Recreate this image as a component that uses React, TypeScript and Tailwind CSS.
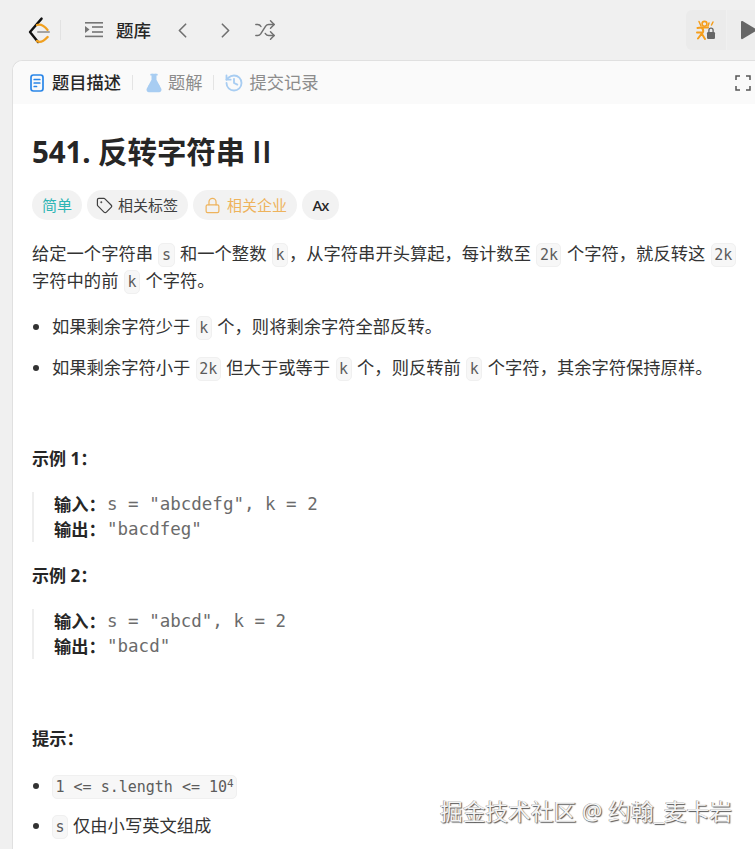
import { Tag, Lock, ChevronLeft, ChevronRight, Shuffle, FlaskConical, History } from "lucide-react";
import type { ReactNode } from "react";

const sans = "font-['Noto_Sans','Noto_Sans_CJK_SC',sans-serif]";

function Code({ children, className = "mx-[5.5px]" }: { children: ReactNode; className?: string }) {
  return (
    <code className={`inline-block rounded-[5px] border border-[#f0f0f0] bg-[#f7f7f7] px-[2.5px] font-['DejaVu_Sans_Mono',monospace] text-[15px] leading-[22px] text-[#5c5c5c] ${className}`}>
      {children}
    </code>
  );
}

function Chip({ children, className }: { children: ReactNode; className: string }) {
  return (
    <div className={`flex h-[30px] items-center rounded-full bg-[#f2f2f2] text-[15px] ${className}`}>
      {children}
    </div>
  );
}

function Example({ title, input, output }: { title: string; input: string; output: string }) {
  return (
    <>
      <p className="text-[17px] leading-[27px] font-bold text-[#262626]">{title}</p>
      <div className="mt-[20px] border-l-2 border-[#eeeeee] pl-[20px] text-[17.25px] leading-[25px]">
        <div className="flex items-center">
          <b className="w-[53px] text-[#262626]">输入：</b>
          <span className="font-['DejaVu_Sans_Mono',monospace] text-[17.5px] text-[#6b6b6b]">{input}</span>
        </div>
        <div className="flex items-center">
          <b className="w-[53px] text-[#262626]">输出：</b>
          <span className="font-['DejaVu_Sans_Mono',monospace] text-[17.5px] text-[#6b6b6b]">{output}</span>
        </div>
      </div>
    </>
  );
}

export default function App() {
  return (
    <div className={`relative h-[849px] w-[755px] overflow-hidden bg-[#f0f0f0] ${sans}`}>
      {/* Top bar */}
      <div className="flex h-[60px] items-center">
        <svg viewBox="0 0 24 28" className="ml-[27px] h-[28px] w-[24px]" fill="none" strokeLinecap="round" strokeLinejoin="round">
          <path d="M14.6 2.6 L3 16 L11 26" stroke="#111" strokeWidth="2.4" />
          <path d="M10 9 Q15 7 20.6 14" stroke="#f0a020" strokeWidth="2.2" />
          <path d="M10 25 Q14 28 20.6 21" stroke="#f0a020" strokeWidth="2.4" />
          <path d="M11 16 H22" stroke="#a3a3a3" strokeWidth="2" />
        </svg>
        <div className="ml-[9px] h-[20px] w-px bg-[#e2e2e2]" />
        <svg viewBox="0 0 18 20" className="ml-[24px] h-[20px] w-[18px]" fill="#757575">
          <rect x="0" y="2" width="18" height="1.6" />
          <rect x="7" y="6.2" width="11" height="1.6" />
          <rect x="7" y="11.2" width="11" height="1.6" />
          <rect x="0" y="15.6" width="18" height="1.6" />
          <path d="M0 6 L4.5 9.5 L0 13 Z" />
        </svg>
        <span className="ml-[13px] text-[17.5px] font-medium text-[#262626]">题库</span>
        <ChevronLeft className="ml-[18.5px] text-[#707070]" size={25} strokeWidth={1.6} />
        <ChevronRight className="ml-[18px] text-[#707070]" size={25} strokeWidth={1.6} />
        <Shuffle className="ml-[16.5px] text-[#707070]" size={22} strokeWidth={1.6} />
        <div className="ml-auto flex h-[40px] w-[69px] shrink-0 gap-px self-center overflow-hidden rounded-l-md">
          <div className="flex w-[40px] shrink-0 items-center justify-center bg-[#ebebeb]">
            <svg viewBox="0 0 20 20" className="h-[20px] w-[20px]" fill="none" strokeLinecap="round">
              <circle cx="8.5" cy="3.8" r="2.4" stroke="#f59e1c" strokeWidth="1.6" />
              <path d="M3 1.5 L5 6 M17 2 L15.5 5 M13 3 L12 6" stroke="#f59e1c" strokeWidth="1.5" />
              <path d="M1.5 8 L5.5 7.5 H12 M5.5 7.5 Q9 11 5.5 14 L2 18.5 M6 14 L9 19 M1 12.5 H5.5" stroke="#f59e1c" strokeWidth="2" />
              <rect x="11" y="12" width="8" height="7" rx="1.3" fill="#666" />
              <path d="M12.9 12 V10.2 a2.1 2.1 0 0 1 4.2 0 V12" stroke="#666" strokeWidth="1.3" />
            </svg>
          </div>
          <div className="flex min-w-0 flex-1 items-center bg-[#ededed] pl-[13px]">
            <svg viewBox="0 0 18 20" className="h-[20px] w-[18px] shrink-0" fill="#666">
              <path d="M1 2 Q1 0.5 2.5 1 L16 9 Q17 10 16 11 L2.5 19 Q1 19.5 1 18 Z" />
            </svg>
          </div>
        </div>
      </div>

      {/* Card */}
      <div className="ml-[12px] h-[789px] rounded-tl-[10px] border-t border-l border-[#e0e0e0] bg-white">
        <div className="flex h-[43px] items-center rounded-tl-[10px] bg-[#fafafa] pl-[17px] text-[17.25px]">
          <svg viewBox="0 0 14 18" className="h-[18px] w-[14px]" fill="none" stroke="#2a86e8" strokeWidth="1.7" strokeLinecap="round">
            <rect x="1" y="1" width="12" height="16" rx="2.4" />
            <path d="M4.2 5.5 H9.8 M4.2 9 H9.8 M4.2 12.5 H6.5" />
          </svg>
          <span className="ml-[8px] font-medium text-[#262626]">题目描述</span>
          <div className="ml-[11px] h-[15px] w-px bg-[#e4e4e4]" />
          <FlaskConical size={20} strokeWidth={2} fill="#a8cdf2" className="ml-[11px] text-[#a8cdf2]" />
          <span className="ml-[4px] text-[#8c8c8c]">题解</span>
          <div className="ml-[10px] h-[15px] w-px bg-[#e4e4e4]" />
          <History size={20} strokeWidth={2.2} className="ml-[10px] text-[#a8cdf2]" />
          <span className="ml-[6px] text-[#8c8c8c]">提交记录</span>
          <svg viewBox="0 0 16 16" className="ml-auto mr-[4px] h-[16px] w-[16px]" fill="none" stroke="#555" strokeWidth="1.5">
            <path d="M1 5 V1 H5 M11 1 H15 V5 M15 11 V15 H11 M5 15 H1 V11" />
          </svg>
        </div>

        <div className="pl-[19px] text-[17.3px] leading-[27px] text-[#333333]">
          <h1 className="mt-[28px] text-[29.5px] leading-[40px] font-bold tracking-[-0.1px] text-[#262626]">
            541. 反转字符串 <span className="font-['Inter',sans-serif] font-semibold tracking-[2px]">II</span>
          </h1>

          <div className="mt-[18px] flex gap-[5px]">
            <Chip className="px-[10px] text-[#2db5b5]">简单</Chip>
            <Chip className="gap-[5px] pl-[9px] pr-[10px] text-[#404040]">
              <Tag size={17} strokeWidth={1.7} />
              相关标签
            </Chip>
            <Chip className="gap-[6px] pl-[11px] pr-[10px] text-[#eeb35c]">
              <Lock size={17} strokeWidth={1.7} />
              相关企业
            </Chip>
            <Chip className="w-[37px] justify-center text-[#262626]">
              <span className="font-['Noto_Sans',sans-serif] text-[15px] font-medium tracking-[-1px]">Ax</span>
            </Chip>
          </div>

          <p className="mt-[20px] w-[712px]">
            给定一个字符串<Code>s</Code>和一个整数<Code className="ml-[5.5px] mr-[1px]">k</Code>，从字符串开头算起，每计数至<Code>2k</Code>个字符，就反转这<Code>2k</Code>字符中的前<Code>k</Code>个字符。
          </p>

          <ul className="mt-[19px] list-disc pl-[20px]">
            <li>如果剩余字符少于<Code>k</Code>个，则将剩余字符全部反转。</li>
            <li className="mt-[14px]">如果剩余字符小于<Code>2k</Code>但大于或等于<Code>k</Code>个，则反转前<Code>k</Code>个字符，其余字符保持原样。</li>
          </ul>

          <div className="mt-[64px]">
            <Example title="示例 1：" input={'s = "abcdefg", k = 2'} output={'"bacdfeg"'} />
          </div>
          <div className="mt-[20px]">
            <Example title="示例 2：" input={'s = "abcd", k = 2'} output={'"bacd"'} />
          </div>

          <p className="mt-[66px] font-bold text-[#262626]">提示：</p>
          <ul className="mt-[20px] list-disc pl-[20px]">
            <li>
              <Code className="">
                1 &lt;= s.length &lt;= 10<sup className="text-[11px] leading-none">4</sup>
              </Code>
            </li>
            <li className="mt-[13px]"><Code className="mr-[5px]">s</Code>仅由小写英文组成</li>
          </ul>
        </div>
      </div>

      {/* Watermark */}
      <div className="absolute top-[798px] left-[440px] text-[22.7px] leading-[28px] whitespace-nowrap text-[#f4f4f4] [text-shadow:1px_1px_1px_#555,-0.5px_-0.5px_0_#888]">
        掘金技术社区 @ 约翰_麦卡岩
      </div>
    </div>
  );
}
